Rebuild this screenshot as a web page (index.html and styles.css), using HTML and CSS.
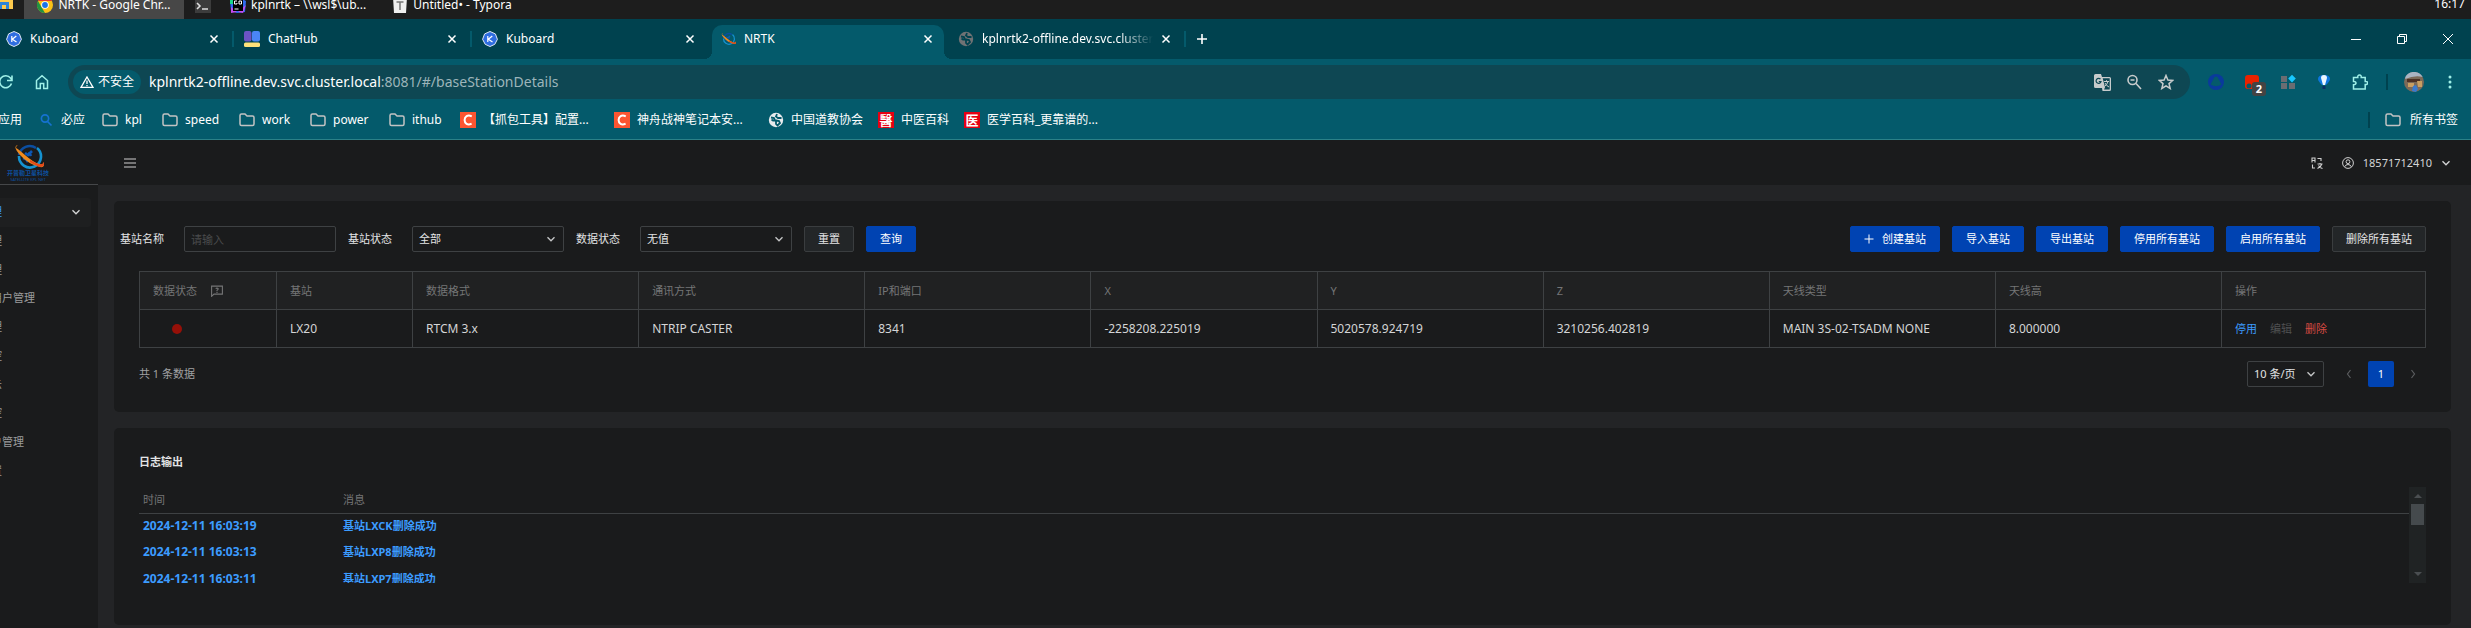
FILE: index.html
```html
<!DOCTYPE html>
<html lang="zh-CN">
<head>
<meta charset="utf-8">
<title>NRTK</title>
<link rel="stylesheet" href="styles.css">
</head>
<body>
<svg class="defs" aria-hidden="true">
  <symbol id="i-kub" viewBox="0 0 16 16"><path d="M8 .5l5.400 2.400 2 5.400-2.600 5L8 15.500l-4.800-2.200-2.600-5 2-5.400z" fill="#2f6de0" stroke="#dfe8f5" stroke-width="1"/><path d="M5.800 5v6M10.300 5L6.300 8.300 10.500 11" fill="none" stroke="#fff" stroke-width="1.200"/></symbol>
  <symbol id="i-x" viewBox="0 0 10 10"><path d="M1.500 1.500l7 7M8.500 1.500l-7 7" stroke="currentColor" stroke-width="1.500" fill="none"/></symbol>
  <symbol id="i-folder" viewBox="0 0 16 14"><path d="M1 2.500Q1 1 2.500 1H6l2 2h5.500Q15 3 15 4.500v6.500q0 1.500-1.500 1.500h-11Q1 12.500 1 11z" fill="none" stroke="#c3c3c3" stroke-width="1.500"/></symbol>
  <symbol id="i-globe" viewBox="0 0 16 16"><circle cx="8" cy="8" r="7.200" fill="currentColor"/><path d="M3 5.500l3 .5 1 2.500H5L3.500 7.500M9 2l-1 2.500 2 1.500h3.500M8 8.500l3 .5 1 2-2.500 2.500L8 12z" fill="none" stroke="var(--hole)" stroke-width="1.800"/></symbol>
  <symbol id="i-csdn" viewBox="0 0 16 16"><path d="M0 0h16v16H0z" fill="#fc5531"/><path d="M11.800 4.300C7.500 2.300 4.600 4.500 4.600 8s2.900 5.700 7 3.700" fill="none" stroke="#fff" stroke-width="2"/></symbol>
  <symbol id="i-down" viewBox="0 0 10 10"><path d="M1.500 3.200L5 6.800l3.500-3.600" fill="none" stroke="currentColor" stroke-width="1.300"/></symbol>
  <symbol id="i-orbit" viewBox="0 0 32 26"><path d="M25 4a11 11 0 1 1-18 8" fill="none" stroke="#1592cf" stroke-width="2.600"/><path d="M7 11A11 11 0 0 1 24 4" fill="none" stroke="#0b4ea0" stroke-width="2.600"/><path d="M13 9l3 2 4-4M17 8l2 4M11 14l3 1 2 3" fill="none" stroke="#0d57b5" stroke-width="2.600"/><path d="M6 1Q0 2 8 11t20 12q5 1 4-5-1 3-5 2-6-2-14-9T4 4Q4 2 6 1z" fill="#f08a1d"/><path d="M18 18q6 4 10 5 5 0 4-5-1 3-5 2-4-1-9-4z" fill="#e2491b"/></symbol>
</svg>

<div class="taskbar">
  <svg class="explorer" viewBox="0 0 16 16"><path d="M0 0h16v14H0z" fill="#fcc94d"/><path d="M2 7h10v7h-3v-4H5v4H2z" fill="#2b83d8"/></svg>
  <button class="task active"><svg class="i16" viewBox="0 0 16 16"><circle cx="8" cy="8" r="8" fill="#fbc116"/><path d="M1 4a8 8 0 0 1 14 0H8z" fill="#e33b2e"/><path d="M1 4l4 7 3 5A8 8 0 0 1 1 4z" fill="#229342"/><circle cx="8" cy="8" r="3.800" fill="#fff"/><circle cx="8" cy="8" r="2.900" fill="#1a73e8"/></svg>NRTK - Google Chr...</button>
  <button class="task term" aria-label="终端"><svg class="i16" viewBox="0 0 16 16"><path d="M0 0h16v16H0z" fill="#3c3c3c"/><path d="M2 6l3 3-3 3M7 12h6" fill="none" stroke="#ddd" stroke-width="1.600"/></svg></button>
  <button class="task go"><svg class="i16" viewBox="0 0 16 16"><path d="M0 3l8-3 8 4-1 11-8 1-6-2z" fill="#2f6bf0"/><path d="M1 10l6 5-6 1zM16 8l-3 8-5-1z" fill="#c44bf0"/><path d="M0 3l4-2v6H0z" fill="#18d68b"/><path d="M3 2h10v12H3z" fill="#000"/><path d="M7 4H4.500v3H7V6M9 4h2.500v3H9zM4.500 12h4" fill="none" stroke="#fff"/></svg>kplnrtk – \\wsl$\ub...</button>
  <button class="task"><svg class="i16" viewBox="0 0 16 16"><path d="M1 0h14l-1 16H2z" fill="#efefef"/><path d="M4.500 5h7M8 5v8" stroke="#777" stroke-width="1.500"/></svg>Untitled• - Typora</button>
  <span class="clock">16:17</span>
</div>

<div class="tabstrip">
  <div class="tab"><svg class="i16"><use href="#i-kub"/></svg><span class="tt">Kuboard</span><button class="cl" aria-label="关闭"><svg><use href="#i-x"/></svg></button></div>
  <div class="tab"><svg class="i16" viewBox="0 0 16 16"><rect width="7.500" height="10.500" rx="2" fill="#6b53c4"/><rect x="8" width="8" height="10.500" rx="2" fill="#4a86f7"/><rect y="11.500" width="16" height="4.500" rx="1.500" fill="#ffe27a"/></svg><span class="tt">ChatHub</span><button class="cl" aria-label="关闭"><svg><use href="#i-x"/></svg></button></div>
  <div class="tab last"><svg class="i16"><use href="#i-kub"/></svg><span class="tt">Kuboard</span><button class="cl" aria-label="关闭"><svg><use href="#i-x"/></svg></button></div>
  <div class="tab on"><svg class="i16"><use href="#i-orbit"/></svg><span class="tt">NRTK</span><button class="cl" aria-label="关闭"><svg><use href="#i-x"/></svg></button></div>
  <div class="tab"><svg class="i16 grey"><use href="#i-globe"/></svg><span class="tt fade">kplnrtk2-offline.dev.svc.cluster.local</span><button class="cl" aria-label="关闭"><svg><use href="#i-x"/></svg></button></div>
  <button class="plus" aria-label="新标签页"><svg viewBox="0 0 12 12"><path d="M6 1v10M1 6h10" stroke="#fff" stroke-width="1.600"/></svg></button>
  <div class="win">
    <button aria-label="最小化"><svg viewBox="0 0 10 10"><path d="M0 5.500h10" stroke="#fff"/></svg></button>
    <button aria-label="还原"><svg viewBox="0 0 10 10"><path d="M.5 2.500h7v7h-7zM2.500 2.500v-2h7v7h-2" fill="none" stroke="#fff"/></svg></button>
    <button aria-label="关闭"><svg viewBox="0 0 10 10"><path d="M0 0l10 10M10 0L0 10" stroke="#fff"/></svg></button>
  </div>
</div>

<div class="toolbar">
  <button class="slot" aria-label="重新加载"><svg class="i16 mint" viewBox="0 0 16 16"><path d="M13.500 9.500A6 6 0 1 1 12.500 4l1.500 2M14 1.500V6.500H9" fill="none" stroke="currentColor" stroke-width="1.600"/></svg></button>
  <button class="slot" aria-label="主页"><svg class="i16 mint" viewBox="0 0 16 16"><path d="M2.500 14.500V6.500L8 1.800l5.500 4.700v8h-3.800V9.500H6.300v5z" fill="none" stroke="currentColor" stroke-width="1.500"/></svg></button>
  <div class="address">
    <button class="chip"><svg viewBox="0 0 14 12"><path d="M7 1L13 11.300H1z" fill="none" stroke="#fff" stroke-width="1.300"/><path d="M7 4.500v3.500M7 9v1.200" stroke="#fff" stroke-width="1.300"/></svg>不安全</button>
    <a class="url" href="#/baseStationDetails">kplnrtk2-offline.dev.svc.cluster.local<span>:8081/#/baseStationDetails</span></a>
    <div class="omni">
      <button aria-label="翻译"><svg class="i17" viewBox="0 0 17 17"><path d="M0 1.500Q0 0 1.500 0H7l1 3h7.500Q17 3 17 4.500v11q0 1.500-1.500 1.500H8.500L8 14H1.500Q0 14 0 12.500z" fill="#c7cbcc"/><path d="M8.700 4.300h7v11.300H10l1-2z" fill="#0e4753"/><path d="M6.500 5.200A2.500 2.500 0 1 0 7 7.500H4.800" fill="none" stroke="#0e4753" stroke-width="1.200"/><path d="M10 7.500h5M12.500 6.200v1.300M14 7.500q-1 3.500-3.500 5M11 9q1.500 3 4 4" fill="none" stroke="#c7cbcc"/></svg></button>
      <button aria-label="缩放"><svg class="i16" viewBox="0 0 16 16"><circle cx="6.500" cy="6" r="4.500" fill="none" stroke="#c7cbcc" stroke-width="1.600"/><path d="M10 9.500l5 5.500M4.500 6h4" stroke="#c7cbcc" stroke-width="1.600"/></svg></button>
      <button aria-label="收藏"><svg class="i16" viewBox="0 0 16 16"><path d="M8 1.500l1.900 4.600 4.900.3-3.800 3.200 1.200 4.900L8 11.800l-4.200 2.700L5 9.600 1.200 6.400l4.900-.3z" fill="none" stroke="#c7cbcc" stroke-width="1.500"/></svg></button>
    </div>
  </div>
  <div class="exts">
    <button class="slot" aria-label="扩展"><svg class="i16" viewBox="0 0 16 16"><circle cx="8" cy="8" r="8" fill="#0a3a9c"/><path d="M8 2.500q2 0 2.800 3l2.700 5q-5.500 3.500-11 0l2.700-5Q6 2.500 8 2.500z" fill="#045a6b"/></svg></button>
    <button class="slot badge" aria-label="扩展"><svg class="i16" viewBox="0 0 16 16"><rect x="1" y="1" width="14" height="14" rx="3" fill="#ea2200"/><circle cx="5" cy="12" r="2.500" fill="#045a6b"/></svg><span>2</span></button>
    <button class="slot" aria-label="扩展"><svg class="i16" viewBox="0 0 16 16"><path d="M1 2h6v6H1zM1 9h6v6H1zM9 9h6v6H9z" fill="#6b6d72"/><path d="M12 .8L15.800 4.600 12 8.400 8.200 4.600z" fill="#18c8ff"/></svg></button>
    <button class="slot" aria-label="扩展"><svg class="i16" viewBox="0 0 16 16"><path d="M2 5Q2 1 8 1t6 4q0 2-4 6H6Q2 7 2 5z" fill="#0c76dd"/><path d="M5 4q0-3 3-3t3 3l-2 7H7z" fill="#eaf6ff"/><path d="M6.500 12h3v3h-3z" fill="#0b2c66"/></svg></button>
    <button class="slot" aria-label="扩展程序"><svg class="i16 mint" viewBox="0 0 16 16"><path d="M1.500 3.500h4.300q-.3-2.500 1.700-2.500t1.700 2.500h4v4q2.300-.3 2.300 1.500t-2.300 1.500v4.500H1.500v-4.300q2.500 0 2.500-1.700T1.500 7.500z" fill="none" stroke="currentColor" stroke-width="1.500"/></svg></button>
    <i class="bar"></i>
    <button class="slot" aria-label="个人资料"><svg class="i20" viewBox="0 0 20 20"><circle cx="10" cy="10" r="10" fill="#7c6a58"/><path d="M1.300 5A10 10 0 0 1 18.700 5q-8-2-17.400 2z" fill="#aab4c2"/><path d="M3 7h13v3H3z" fill="#4d3024"/><path d="M4 11h6v4H4zM13 9h5v6h-4z" fill="#c99e62"/><path d="M9 14l3-1 2 4-2 3-4-1z" fill="#3a7ad0"/></svg></button>
    <button class="slot" aria-label="菜单"><svg class="i16 mint" viewBox="0 0 16 16"><g fill="currentColor"><circle cx="8" cy="3" r="1.500"/><circle cx="8" cy="8" r="1.500"/><circle cx="8" cy="13" r="1.500"/></g></svg></button>
  </div>
</div>

<nav class="bookmarks">
  <a href="#">应用</a>
  <a href="#"><svg class="i16" viewBox="0 0 16 16"><circle cx="7" cy="6.500" r="3.600" fill="none" stroke="#1672d0" stroke-width="1.700"/><path d="M9.500 9.500l4 4" stroke="#1672d0" stroke-width="1.700"/></svg>必应</a>
  <a href="#"><svg class="i16"><use href="#i-folder"/></svg>kpl</a>
  <a href="#"><svg class="i16"><use href="#i-folder"/></svg>speed</a>
  <a href="#"><svg class="i16"><use href="#i-folder"/></svg>work</a>
  <a href="#"><svg class="i16"><use href="#i-folder"/></svg>power</a>
  <a href="#"><svg class="i16"><use href="#i-folder"/></svg>ithub</a>
  <a href="#"><svg class="i16"><use href="#i-csdn"/></svg>【抓包工具】配置...</a>
  <a href="#"><svg class="i16"><use href="#i-csdn"/></svg>神舟战神笔记本安...</a>
  <a href="#"><svg class="i16 lite"><use href="#i-globe"/></svg>中国道教协会</a>
  <a href="#"><span class="seal">醫</span>中医百科</a>
  <a href="#"><span class="seal">医</span>医学百科_更靠谱的...</a>
  <a class="all" href="#"><svg class="i16"><use href="#i-folder"/></svg>所有书签</a>
</nav>

<div class="app">
  <aside class="side">
    <div class="brand"><svg class="orbit"><use href="#i-orbit"/></svg><b>开普勒卫星科技</b><small>SATELLITE KPL NET</small></div>
    <ul class="menu">
      <li class="open"><a href="#">理</a><svg class="i10"><use href="#i-down"/></svg></li>
      <li><a href="#">理</a></li>
      <li><a href="#">理</a></li>
      <li><a href="#">用户管理</a></li>
      <li><a href="#">理</a></li>
      <li><a href="#">控</a></li>
      <li><a href="#">示</a></li>
      <li><a href="#">控</a></li>
      <li><a href="#">户管理</a></li>
      <li><a href="#">置</a></li>
    </ul>
  </aside>
  <div class="body">
    <header class="head">
      <button aria-label="折叠菜单"><svg class="burger" viewBox="0 0 12 12"><path d="M0 2h12M0 6h12M0 10h12" stroke="#cfcfcf" stroke-width="1.200"/></svg></button>
      <div class="user">
        <button aria-label="语言"><svg class="i12" viewBox="0 0 12 12"><path d="M1 5.500V1h3v4.500M1 3.500h3M6.500 1.500H10V4M1.500 7.500V11h2.500M6.500 7h5M9 6v1M10.800 7Q10 10 6.500 11.500M7.500 8.500q1.500 2.500 4 3" fill="none" stroke="#d0d0d0" stroke-width="1.100"/></svg></button>
        <button class="acct"><svg class="i12" viewBox="0 0 12 12"><circle cx="6" cy="6" r="5.400" fill="none" stroke="#d0d0d0"/><circle cx="6" cy="4.700" r="1.900" fill="none" stroke="#d0d0d0"/><path d="M2.700 9.800Q3.500 7.500 6 7.500t3.300 2.300" fill="none" stroke="#d0d0d0"/></svg>18571712410<svg class="i10"><use href="#i-down"/></svg></button>
      </div>
    </header>
    <main>
      <section class="card">
        <div class="filters">
          <label for="nm">基站名称</label><input id="nm" type="text" placeholder="请输入">
          <label for="st">基站状态</label><span class="sel"><select id="st"><option>全部</option></select><svg class="i10"><use href="#i-down"/></svg></span>
          <label for="ds">数据状态</label><span class="sel"><select id="ds"><option>无值</option></select><svg class="i10"><use href="#i-down"/></svg></span>
          <button class="btn">重置</button><button class="btn pri q">查询</button>
          <div class="acts">
            <button class="btn pri"><svg class="i10" viewBox="0 0 10 10"><path d="M5 .5v9M.5 5h9" stroke="#fff"/></svg>创建基站</button>
            <button class="btn pri">导入基站</button>
            <button class="btn pri">导出基站</button>
            <button class="btn pri">停用所有基站</button>
            <button class="btn pri">启用所有基站</button>
            <button class="btn">删除所有基站</button>
          </div>
        </div>
        <div class="inner">
          <table class="grid">
            <colgroup><col class="c1"><col class="c2"><col><col><col><col><col><col><col><col><col class="c3"></colgroup>
            <thead><tr><th><span class="hint">数据状态<svg class="i12" viewBox="0 0 12 12"><path d="M.6 1.100h10.800v8H3L.6 11.300z" fill="none" stroke="currentColor" stroke-width="1.100"/><path d="M4.700 3.700Q6 2.500 7.200 3.700 7.400 4.800 6 5.300v.9M6 7v1" fill="none" stroke="currentColor" stroke-width="1.100"/></svg></span></th><th>基站</th><th>数据格式</th><th>通讯方式</th><th>IP和端口</th><th>X</th><th>Y</th><th>Z</th><th>天线类型</th><th>天线高</th><th>操作</th></tr></thead>
            <tbody><tr><td><i class="dot"></i></td><td>LX20</td><td>RTCM 3.x</td><td>NTRIP CASTER</td><td>8341</td><td>-2258208.225019</td><td>5020578.924719</td><td>3210256.402819</td><td>MAIN 3S-02-TSADM NONE</td><td>8.000000</td><td><div class="ops"><button class="blue">停用</button><button disabled>编辑</button><button class="red">删除</button></div></td></tr></tbody>
          </table>
          <div class="pager">
            <span class="sum">共 1 条数据</span>
            <span class="sel small"><select aria-label="每页条数"><option>10 条/页</option></select><svg class="i10"><use href="#i-down"/></svg></span>
            <div class="pages">
              <button disabled aria-label="上一页"><svg class="i10" viewBox="0 0 10 10"><path d="M6.500 1L3.500 5l3 4" fill="none" stroke="#5b5d5f" stroke-width="1.200"/></svg></button>
              <button class="cur">1</button>
              <button disabled aria-label="下一页"><svg class="i10" viewBox="0 0 10 10"><path d="M3.500 1l3 4-3 4" fill="none" stroke="#5b5d5f" stroke-width="1.200"/></svg></button>
            </div>
          </div>
        </div>
      </section>
      <section class="card logs">
        <h2>日志输出</h2>
        <div class="scroller">
          <table class="log">
            <thead><tr><th>时间</th><th>消息</th></tr></thead>
            <tbody>
              <tr><td>2024-12-11 16:03:19</td><td>基站LXCK删除成功</td></tr>
              <tr><td>2024-12-11 16:03:13</td><td>基站LXP8删除成功</td></tr>
              <tr><td>2024-12-11 16:03:11</td><td>基站LXP7删除成功</td></tr>
            </tbody>
          </table>
          <div class="sbar"><i class="up"></i><i class="thumb"></i><i class="dn"></i></div>
        </div>
      </section>
    </main>
  </div>
</div>
</body>
</html>
```

FILE: styles.css
```css
* { box-sizing: border-box; }
html, body { margin: 0; height: 100%; }
body {
  display: flex; flex-direction: column; overflow: hidden;
  background: #232426; color: #d4d5d6;
  font: 12px/16px "Noto Sans", "Noto Sans CJK SC", sans-serif;
}
button { font: inherit; color: inherit; background: none; border: 0; padding: 0; display: flex; align-items: center; justify-content: center; white-space: nowrap; }
a { color: inherit; text-decoration: none; white-space: nowrap; }
svg { display: block; flex: none; }
.defs { position: absolute; width: 0; height: 0; }
.i10 { width: 10px; height: 10px; }
.i12 { width: 12px; height: 12px; }
.i16 { width: 16px; height: 16px; }
.i17 { width: 17px; height: 17px; }
.i20 { width: 20px; height: 20px; }
.mint { color: #9ff0e8; }
.grey { color: #6f7274; --hole: #00424f; }
.lite { color: #e8eaed; --hole: #045a6b; }

.taskbar { display: flex; align-items: flex-end; height: 19px; flex: none; background: #1d1d1d; overflow: hidden; color: #fff; }
.explorer { width: 16px; height: 16px; margin: 0 11px 8px -3px; align-self: flex-end; }
.task { height: 28px; padding: 0 8px; gap: 5px; margin-right: 3px; line-height: 12px; }
.task.active { width: 160px; background: #474747; }
.task.go { margin-right: 10px; }
.clock { margin: 0 6px 8px auto; line-height: 14px; }

.tabstrip { display: flex; height: 40px; flex: none; padding-left: 4px; background: #00424f; color: #fff; }
.tab { position: relative; display: flex; align-items: center; gap: 8px; width: 230px; height: 34px; margin: 6px 8px 0 0; padding: 0 15px 6px 2px; }
.tab::after { content: ""; position: absolute; right: 0; top: 6px; width: 2px; height: 16px; background: #045a6b; }
.tab.last::after { display: none; }
.tab.on::before { content: ""; position: absolute; left: -6px; right: 4px; top: 0; bottom: 0; border-radius: 10px 10px 0 0; background: #045a6b; }
.tab.on::after {
  left: -14px; right: -4px; top: auto; bottom: 0; width: auto; height: 8px;
  background:
    radial-gradient(circle at 0 0, transparent 8px, #045a6b 8px) left / 8px 8px no-repeat,
    radial-gradient(circle at 100% 0, transparent 8px, #045a6b 8px) right / 8px 8px no-repeat;
}
.tab.on > * { position: relative; }
.tt { flex: 1; overflow: hidden; white-space: nowrap; }
.fade { -webkit-mask-image: linear-gradient(90deg, #000 80%, transparent); mask-image: linear-gradient(90deg, #000 80%, transparent); }
.cl svg { width: 10px; height: 10px; }
.plus { width: 16px; }
.plus svg { width: 12px; height: 12px; }
.win { display: flex; margin-left: auto; }
.win button { width: 46px; }
.win svg { width: 10px; height: 10px; }

.toolbar { display: flex; align-items: center; height: 46px; flex: none; background: #045a6b; padding-right: 3px; }
.toolbar > .slot:first-child { margin-left: -12px; }
.slot { width: 36px; height: 34px; flex: none; }
.address { flex: 1; display: flex; align-items: center; height: 34px; margin: 0 8px; padding: 0 8px 0 5px; border-radius: 17px; background: #0e4753; }
.chip { gap: 4px; width: 68px; height: 24px; border-radius: 12px; background: #045a6b; color: #fff; }
.chip svg { width: 14px; height: 12px; }
.url { margin-left: 8px; font-size: 14px; line-height: 20px; color: #fff; }
.url span { color: #9db5ba; }
.omni { display: flex; margin-left: auto; }
.omni button { width: 32px; height: 24px; }
.exts { display: flex; align-items: center; }
.bar { width: 2px; height: 16px; margin: 0 8px; background: #00424f; }
.badge { position: relative; }
.badge span { position: absolute; left: 18px; top: 17px; width: 14px; height: 14px; border-radius: 3px; background: #444; color: #fff; font-weight: 700; font-size: 11px; line-height: 14px; }

.bookmarks {
  display: grid; align-items: center; height: 35px; flex: none; padding-bottom: 5px;
  grid-template-columns: 38px 64px 60px 77px 71px 79px 71px 154px 154px 110px 86px 1fr auto;
  background: #045a6b; border-bottom: 1px solid #2b8188; color: #fff;
}
.bookmarks a { display: flex; align-items: center; gap: 7px; }
.bookmarks a:first-child { margin-left: -2px; }
.bookmarks .all { gap: 9px; padding: 0 13px 0 15px; border-left: 2px solid #00424f; }
.seal { width: 16px; height: 16px; background: #e60012; font: 700 13px/16px "Noto Sans CJK SC", sans-serif; text-align: center; }

.app { flex: 1; display: flex; min-height: 0; font-size: 11px; }
.side { width: 98px; flex: none; overflow: hidden; background: #1a1b1c; }
.brand { display: flex; flex-direction: column; align-items: center; height: 45px; padding: 4px 49px 0 7px; border-bottom: 1px solid #454749; color: #0d4f9e; }
.orbit { width: 32px; height: 26px; }
.brand b { font-size: 6px; line-height: 7px; white-space: nowrap; }
.brand small { font-size: 4px; line-height: 5px; white-space: nowrap; }
.menu { display: grid; grid-auto-rows: 1fr; height: 287px; list-style: none; margin: 13px 7px 0 -9px; padding: 0; color: #9b9c9d; }
.menu li { display: flex; align-items: center; }
.menu .open { justify-content: space-between; padding-right: 10px; border-radius: 3px; background: #1e1f20; color: #3c9cff; }
.menu .open svg { color: #d4d5d6; }

.body { flex: 1; min-width: 0; }
.head { display: flex; align-items: center; justify-content: space-between; height: 45px; padding: 0 20px 0 26px; background: #1a1b1c; }
.burger { width: 12px; height: 12px; }
.user, .acct { display: flex; align-items: center; }
.user { gap: 19px; }
.acct { gap: 9px; }
main { display: flex; flex-direction: column; gap: 16px; padding: 16px 20px 3px 16px; }
.card { border-radius: 5px; background: #1a1b1c; padding: 25px; }
.filters { display: flex; align-items: center; margin-left: -19px; }
.filters label { margin-right: 20px; color: #e3e4e5; }
input, select { width: 152px; height: 26px; border: 1px solid #3e4143; border-radius: 2px; background: none; color: #e3e4e5; font: inherit; padding: 0 6px; outline: 0; appearance: none; }
input::placeholder { color: #4a4b4c; }
input, .filters .sel { margin-right: 12px; }
.sel { position: relative; }
.sel select { display: block; }
.sel svg { position: absolute; right: 8px; top: 8px; color: #c6c7c8; pointer-events: none; }
.btn { height: 26px; padding: 0 13px; gap: 8px; border: 1px solid #3a3d3f; border-radius: 2px; background: #232628; color: #e3e4e5; }
.pri { border-color: #0043b2; background: #0043b2; color: #fff; }
.q { margin-left: 12px; }
.acts { display: flex; gap: 12px; margin-left: auto; }
.inner { display: flex; flex-direction: column; }
.grid { table-layout: fixed; width: 100%; margin-top: 19px; border-collapse: collapse; }
.c1 { width: 137px; }
.c2 { width: 136px; }
.c3 { width: 204px; }
.grid th, .grid td { height: 38px; padding: 0 13px; border: 1px solid #3e4143; text-align: left; font-weight: 400; }
.grid th { background: #202122; color: #747576; }
.grid td { color: #d4d5d6; font-size: 12px; }
.hint { display: flex; align-items: center; gap: 14px; }
.dot { display: block; width: 10px; height: 10px; margin-left: 19px; border-radius: 50%; background: #961008; }
.ops { display: flex; gap: 13px; font-size: 11px; }
.ops button { color: #4f5051; }
.ops .blue { color: #3c9cff; }
.ops .red { color: #d54941; }
.pager { display: flex; align-items: center; margin-top: 13px; }
.sum { color: #a0a1a2; margin-right: auto; }
.small select { width: 77px; }
.pages { display: flex; gap: 6px; margin-left: 12px; }
.pages button { width: 26px; height: 26px; border-radius: 2px; }
.pages .cur { background: #0043b2; color: #fff; }

.logs { padding-bottom: 42px; }
h2 { margin: 1px 0 17px; font-size: 11px; line-height: 16px; font-weight: 700; color: #e3e4e5; }
.scroller { display: flex; height: 96px; overflow: hidden; }
.log { flex: 1; height: 105px; border-collapse: collapse; }
.log th, .log td { height: 26px; padding: 0 4px; text-align: left; }
.log th { border-bottom: 1px solid #3e4143; font-weight: 400; color: #747576; }
.log th:first-child { width: 200px; }
.log td { font-weight: 700; color: #3c9cff; }
.log td:first-child { font-size: 12px; }
.sbar { display: flex; flex-direction: column; align-items: center; width: 17px; padding: 7px 0; background: #202324; }
.up, .dn { border: 4px solid transparent; }
.up { border-top: 0; border-bottom-color: #4a4e51; }
.thumb { width: 13px; height: 21px; margin-top: 6px; background: #454a4d; }
.dn { border-bottom: 0; border-top-color: #4a4e51; margin-top: auto; }
```
